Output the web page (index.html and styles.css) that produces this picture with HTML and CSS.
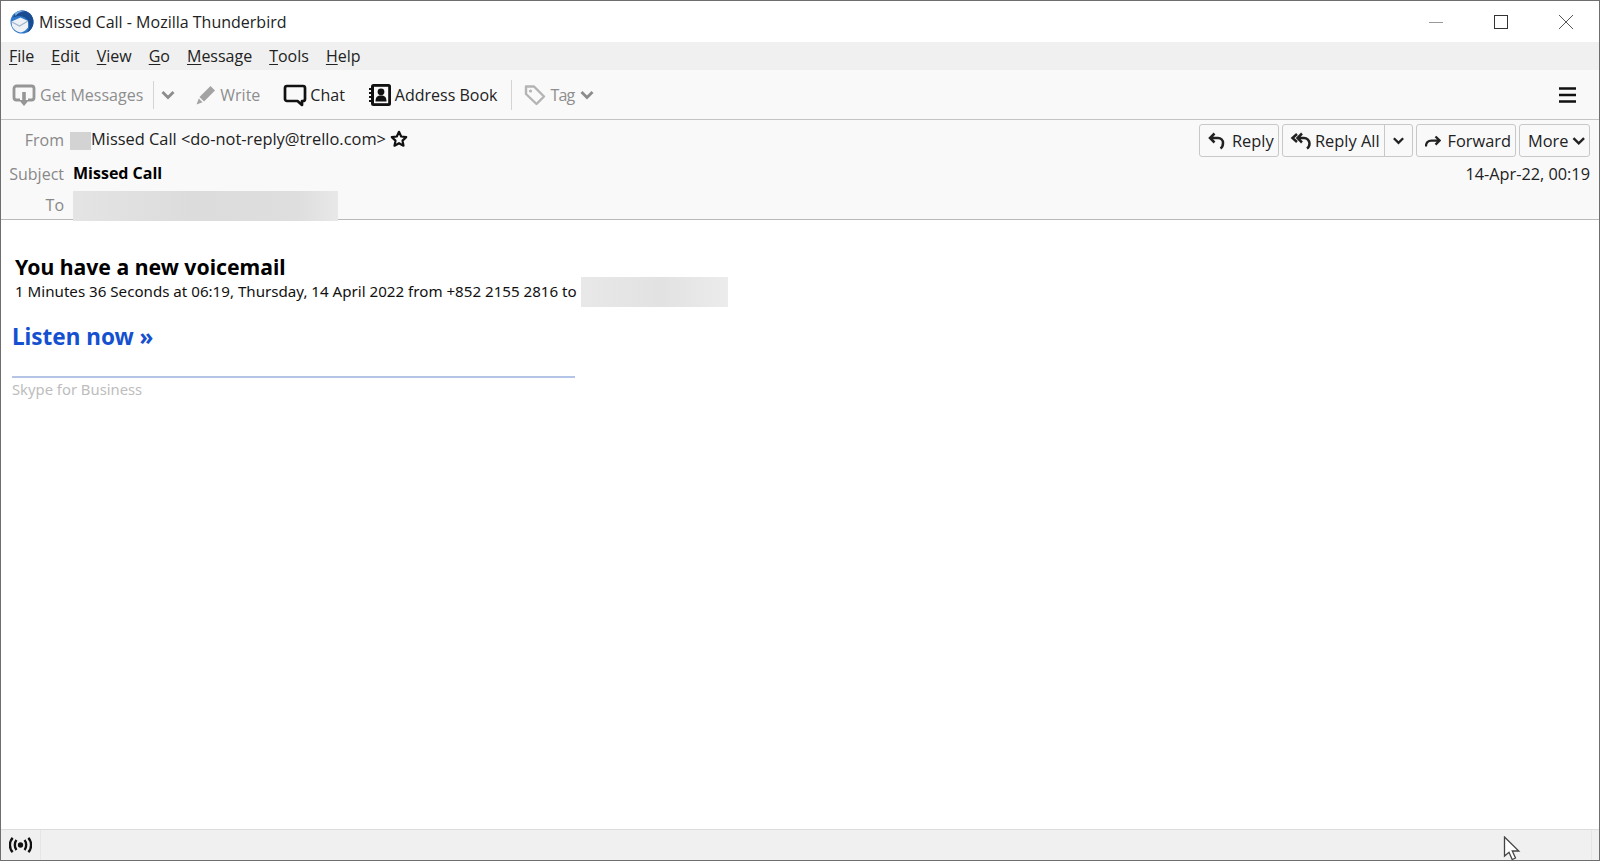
FILE: index.html
```html
<!DOCTYPE html>
<html lang="en">
<head>
<meta charset="utf-8">
<title>Missed Call - Mozilla Thunderbird</title>
<link rel="stylesheet" href="styles.css">
</head>
<body>
<div class="window">
  <header class="titlebar">
    <svg class="logo" viewBox="0 0 24 24" width="24" height="24">
      <circle cx="12" cy="12" r="11.500" fill="#2f78c9"/>
      <path d="M12 .5c6.500 0 11.500 5 11.500 11.500 0 5-3 9-6.500 10.500 1.800-2.500 2.500-5 2.200-8-.5-5-5-8.500-10-8.500-2 0-4 .5-6 1.500C4.500 3.500 8 .5 12 .5z" fill="#1a4c92"/>
      <path d="M5 3c2-1.500 4.500-2.300 7-2.300 1 0 2 .1 3 .4C11 1.500 7.500 3 5.500 6z" fill="#7fb2e8"/>
      <path d="M1.500 11.500l9-4 7.500 3.500v6.500c-2 2.500-4 4.500-7 5-4-.5-7.500-3-9-6.500z" fill="#eef2f7"/>
      <path d="M2 12l7.500 4 8.500-5" fill="none" stroke="#9fb4cf" stroke-width="1.200"/>
    </svg>
    <span class="title">Missed Call - Mozilla Thunderbird</span>
    <div class="winctl">
      <svg viewBox="0 0 16 16" width="16" height="16"><path d="M1 8.500h14" stroke="#999" stroke-width="1"/></svg>
      <svg viewBox="0 0 16 16" width="16" height="16"><rect x="1.500" y="1.500" width="13" height="13" fill="none" stroke="#333" stroke-width="1"/></svg>
      <svg viewBox="0 0 16 16" width="16" height="16"><path d="M1 1l14 14M15 1L1 15" stroke="#555" stroke-width="1"/></svg>
    </div>
  </header>

  <nav class="menubar">
    <span><u>F</u>ile</span><span><u>E</u>dit</span><span><u>V</u>iew</span><span><u>G</u>o</span><span><u>M</u>essage</span><span><u>T</u>ools</span><span><u>H</u>elp</span>
  </nav>

  <div class="toolbar">
    <div class="tool dim tool-get">
      <svg viewBox="0 0 24 24" width="24" height="24"><path d="M8 17H4.500A2.500 2.500 0 0 1 2 14.500v-9A2.500 2.500 0 0 1 4.500 3h15A2.500 2.500 0 0 1 22 5.500v9a2.500 2.500 0 0 1-2.500 2.500H16" fill="none" stroke="#969696" stroke-width="2.800"/><path d="M10.200 9h3.600v8H17l-5 6-5-6h3.200z" fill="#969696"/></svg>
      <span>Get Messages</span>
    </div>
    <i class="sep sep-get"></i>
    <svg class="chev chev-get" viewBox="0 0 14 10" width="14" height="10"><path d="M1.500 2l5.500 5.500L12.500 2" fill="none" stroke="#8c8c8c" stroke-width="2.800"/></svg>
    <div class="tool dim tool-write">
      <svg viewBox="0 0 20 20" width="20" height="20"><path d="M14.500 1l4.500 4.500L8 16.500 3.500 12zM2.800 13.500l3.700 3.700L.5 19.500z" fill="#a3a3a3"/></svg>
      <span>Write</span>
    </div>
    <div class="tool tool-chat">
      <svg viewBox="0 0 24 24" width="24" height="24"><path d="M4 3h16a2 2 0 0 1 2 2v11a2 2 0 0 1-2 2h-1v4l-4.500-4H4a2 2 0 0 1-2-2V5a2 2 0 0 1 2-2z" fill="none" stroke="#111" stroke-width="2.700" stroke-linejoin="round"/></svg>
      <span>Chat</span>
    </div>
    <div class="tool tool-book">
      <svg viewBox="0 0 24 24" width="24" height="24"><rect x="3" y="1" width="20" height="22" rx="2.500" fill="#111"/><rect x="6" y="3.800" width="14.200" height="16.400" fill="#f9f9fa"/><path d="M1 6h4M1 10h4M1 14h4M1 18h4" stroke="#111" stroke-width="1.800"/><circle cx="13" cy="8.800" r="3.400" fill="#111"/><path d="M7.500 18.500c0-4.500 2-6 5.500-6s5.500 1.500 5.500 6z" fill="#111"/></svg>
      <span>Address Book</span>
    </div>
    <i class="sep sep-book"></i>
    <div class="tool dim tool-tag">
      <svg viewBox="0 0 22 22" width="22" height="22"><path d="M2 2.500h8l10 10-7.500 7.500-10.500-10z" fill="none" stroke="#b4b4b4" stroke-width="2.400" stroke-linejoin="round"/><circle cx="6.500" cy="7" r="1.600" fill="#b4b4b4"/></svg>
      <span class="tag-text">Tag</span>
      <svg class="chev" viewBox="0 0 14 10" width="14" height="10"><path d="M1.500 2l5.500 5.500L12.500 2" fill="none" stroke="#8c8c8c" stroke-width="2.800"/></svg>
    </div>
    <svg class="burger" viewBox="0 0 18 18" width="18" height="18"><path d="M0 2.500h17M0 9h17M0 15.500h17" stroke="#111" stroke-width="2.600"/></svg>
  </div>

  <section class="headers">
    <div class="hdr-fields">
      <div class="hdr-row row-from">
        <span class="label">From</span>
        <i class="swatch"></i>
        <span class="from">Missed Call &lt;do-not-reply@trello.com&gt;</span>
        <svg class="star" viewBox="0 0 18 18" width="18" height="18"><path d="M9 1.800l2.200 4.700 5 .6-3.700 3.500 1 5.100L9 13.200l-4.500 2.500 1-5.100L1.800 7.100l5-.6z" fill="none" stroke="#111" stroke-width="2.200" stroke-linejoin="round"/></svg>
      </div>
      <div class="hdr-row row-subject">
        <span class="label">Subject</span>
        <strong class="subject">Missed Call</strong>
      </div>
      <div class="hdr-row row-to">
        <span class="label">To</span>
        <i class="blur blur-to"></i>
      </div>
    </div>
    <div class="hdr-side">
      <div class="actions">
        <button class="btn btn-reply">
          <svg viewBox="0 0 18 18" width="18" height="18"><path d="M6.500 1.500L2 6l4.500 4.500M2.500 6H10a5 5 0 0 1 5 5c0 2.500-1 4.500-2.500 5.500" fill="none" stroke="#222" stroke-width="2.500"/></svg>
          Reply
        </button>
        <div class="btn btn-split">
          <span class="split-main">
            <svg viewBox="0 0 24 18" width="24" height="18"><path d="M7 2L2.500 6 7 10M12 1.500L7.500 6l4.500 4.500M8 6h6a5.500 5.500 0 0 1 5.500 5.500c0 2.300-1 4-2.500 5" fill="none" stroke="#222" stroke-width="2.500"/></svg>
            Reply All
          </span>
          <span class="split-drop"><svg viewBox="0 0 14 10" width="13" height="10"><path d="M2 2l5 5 5-5" fill="none" stroke="#222" stroke-width="2.500"/></svg></span>
        </div>
        <button class="btn btn-forward">
          <svg viewBox="0 0 18 18" width="18" height="18"><path d="M1 15c0-4 2.500-6.500 6-6.500h9M11.500 4l4.500 4.500-4.500 4.500" fill="none" stroke="#222" stroke-width="2.500"/></svg>
          Forward
        </button>
        <button class="btn btn-more">
          More
          <svg viewBox="0 0 14 10" width="14" height="10"><path d="M1.500 2L7 7.500 12.500 2" fill="none" stroke="#222" stroke-width="2.500"/></svg>
        </button>
      </div>
      <div class="date">14-Apr-22, 00:19</div>
    </div>
  </section>

  <main class="message">
    <h1>You have a new voicemail</h1>
    <p class="detail">1 Minutes 36 Seconds at 06:19, Thursday, 14 April 2022 from +852 2155 2816 to <i class="blur blur-msg"></i></p>
    <a class="listen" href="#">Listen now »</a>
    <div class="sig">Skype for Business</div>
  </main>

  <footer class="status">
    <div class="status-icon">
      <svg viewBox="0 0 24 18" width="23" height="18"><circle cx="12" cy="9" r="2.800" fill="#111"/><path d="M7.800 3.800C5.500 6.500 5.500 11.500 7.800 14.200M16.200 3.800c2.300 2.700 2.300 7.700 0 10.400M3.800 1.500C0 5.500 0 12.500 3.800 16.500M20.200 1.500c3.800 4 3.800 11 0 15" fill="none" stroke="#111" stroke-width="2.500"/></svg>
    </div>
    <div class="status-end"></div>
    <svg class="cursor" viewBox="0 0 20 26" width="20" height="26"><path d="M1.500 1v19l4.500-3.800 3.200 7.300 3.300-1.500-3.200-7h6.500z" fill="#fff" stroke="#444" stroke-width="1.300"/></svg>
  </footer>
</div>
</body>
</html>
```

FILE: styles.css
```css
* { box-sizing: border-box; }
html, body { margin: 0; height: 100%; }
body { font-family: "Open Sans", "Noto Sans", sans-serif; color: #111; background: #fff; }
.window { height: 861px; width: 1600px; display: flex; flex-direction: column; border: 1px solid #6e6e6e; overflow: hidden; }

.titlebar { height: 41px; flex: none; display: flex; align-items: center; padding: 0 25px 0 9px; background: #fff; font-size: 16px; }
.logo { margin-right: 5px; }
.title { color: #222; }
.winctl { margin-left: auto; display: flex; gap: 49px; align-items: center; }

.menubar { height: 28px; flex: none; display: flex; align-items: center; gap: 17px; padding-left: 8px; background: #f0f0f0; font-size: 16px; color: #222; }
.menubar u { text-underline-offset: 2px; }

.toolbar { height: 50px; flex: none; display: flex; align-items: center; background: #f9f9fa; border-bottom: 1px solid #c4c4c4; font-size: 16px; padding-left: 11px; padding-right: 22px; }
.tool { display: flex; align-items: center; gap: 4px; color: #222; }
.tool.dim { color: #8e8e8e; }
.sep { width: 1px; height: 30px; background: #d4d4d4; display: block; }
.sep-get { margin-left: 10px; height: 28px; }
.chev-get { margin-left: 7px; }
.tool-write { margin-left: 21px; }
.tool-chat { margin-left: 23px; gap: 3px; }
.tool-book { margin-left: 23px; }
.tool-book span { margin-left: -1px; }
.sep-book { margin-left: 14px; }
.tool-tag { margin-left: 12px; gap: 4px; }
.tag-text { letter-spacing: -0.8px; }
.tool-tag .chev { margin-left: 2px; }
.burger { margin-left: auto; }

.headers { height: 100px; flex: none; display: flex; justify-content: space-between; background: #f9f9fa; border-bottom: 1px solid #b9b9b9; font-size: 16px; }
.hdr-fields { display: flex; flex-direction: column; }
.hdr-row { display: flex; align-items: center; }
.label { width: 63px; text-align: right; color: #888; margin-right: 5px; flex: none; }
.row-from { height: 38px; }
.row-from .label { margin: 2px 6px 0 0; }
.swatch { width: 21px; height: 18px; background: #d3d3d3; display: block; margin-top: 3px; }
.from { color: #222; margin-top: -1px; font-size: 16.400px; }
.star { margin-left: 4px; margin-top: -1px; }
.row-subject { height: 31px; }
.subject { font-weight: 700; color: #000; margin-left: 4px; margin-top: -1px; }
.row-to { height: 30px; }
.row-to .label { margin-top: 2px; }
.blur { display: block; background: linear-gradient(90deg, #e4e4e4, #dcdcdc 45%, #dedede 85%, #e8e8e8); }
.blur-to { width: 265px; height: 30px; margin: 4px 0 0 4px; position: relative; }

.hdr-side { display: flex; flex-direction: column; align-items: flex-end; padding: 4px 9px 0 0; }
.actions { display: flex; gap: 3px; }
.btn { height: 33px; display: flex; align-items: center; gap: 6px; font: inherit; font-size: 16.400px; color: #222; background: #f9f9fa; border: 1px solid #c8c8c8; border-radius: 3px; padding: 0 4px 0 8px; }
.btn-reply { width: 80px; }
.btn-split { width: 131px; padding: 0; gap: 0; }
.split-main { flex: 1; display: flex; align-items: center; gap: 1px; padding-left: 7px; height: 100%; white-space: nowrap; }
.split-drop { width: 28px; height: 100%; display: flex; align-items: center; justify-content: center; border-left: 1px solid #c8c8c8; }
.btn-forward { width: 100px; }
.btn-more { width: 71px; padding: 0 4px 0 8px; gap: 3px; }
.date { margin-top: 6px; color: #222; font-size: 16.300px; }

.message { flex: 1; padding: 32px 0 0 11px; background: #fff; font-family: "Noto Sans", sans-serif; }
.message h1 { margin: 0 0 0 3px; font-size: 21.200px; line-height: 30px; font-weight: 700; color: #000; }
.detail { margin: -6px 0 0 3px; font-size: 15.140px; line-height: 30px; display: flex; gap: 4px; color: #111; height: 30px; }
.blur-msg { width: 147px; height: 30px; margin-top: 1px; background: linear-gradient(90deg, #e8e8e8, #e2e2e2 55%, #ececec); }
.listen { display: block; margin-top: 16px; font-size: 22.500px; line-height: 30px; font-weight: 700; color: #1550d0; text-decoration: none; }
.sig { width: 563px; margin-top: 24px; border-top: 2px solid #b3c4e6; color: #bdbdbd; font-size: 14.800px; line-height: 22px; }

.status { height: 31px; flex: none; position: relative; display: flex; justify-content: space-between; background: #f0f0f0; border-top: 1px solid #dcdcdc; }
.status-icon { width: 40px; display: flex; align-items: center; justify-content: center; border-right: 1px solid #e6e6e6; padding-bottom: 1px; }
.status-end { width: 8px; border-left: 1px solid #e6e6e6; }
.cursor { position: absolute; left: 1502px; top: 6px; }
```
